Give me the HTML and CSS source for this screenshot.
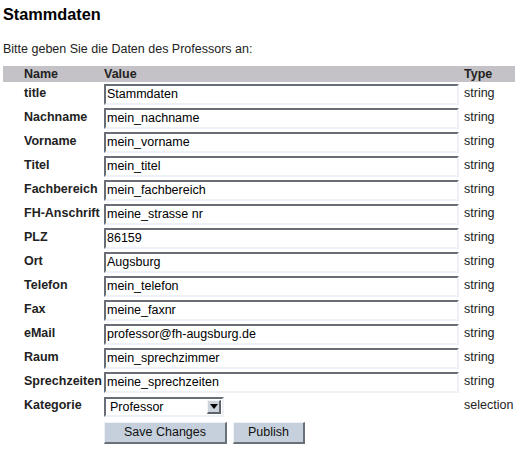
FILE: index.html
```html
<!DOCTYPE html>
<html>
<head>
<meta charset="utf-8">
<link rel="stylesheet" href="styles.css">
</head>
<body>
<h1 class="title">Stammdaten</h1>
<p class="intro">Bitte geben Sie die Daten des Professors an:</p>
<div class="form">
  <div class="row head"><span></span><span>Name</span><span>Value</span><span>Type</span></div>
  <div class="row"><span></span><span class="label">title</span><span class="val"><span class="input">Stammdaten</span></span><span class="type">string</span></div>
  <div class="row"><span></span><span class="label">Nachname</span><span class="val"><span class="input">mein_nachname</span></span><span class="type">string</span></div>
  <div class="row"><span></span><span class="label">Vorname</span><span class="val"><span class="input">mein_vorname</span></span><span class="type">string</span></div>
  <div class="row"><span></span><span class="label">Titel</span><span class="val"><span class="input">mein_titel</span></span><span class="type">string</span></div>
  <div class="row"><span></span><span class="label">Fachbereich</span><span class="val"><span class="input">mein_fachbereich</span></span><span class="type">string</span></div>
  <div class="row"><span></span><span class="label">FH-Anschrift</span><span class="val"><span class="input">meine_strasse nr</span></span><span class="type">string</span></div>
  <div class="row"><span></span><span class="label">PLZ</span><span class="val"><span class="input">86159</span></span><span class="type">string</span></div>
  <div class="row"><span></span><span class="label">Ort</span><span class="val"><span class="input">Augsburg</span></span><span class="type">string</span></div>
  <div class="row"><span></span><span class="label">Telefon</span><span class="val"><span class="input">mein_telefon</span></span><span class="type">string</span></div>
  <div class="row"><span></span><span class="label">Fax</span><span class="val"><span class="input">meine_faxnr</span></span><span class="type">string</span></div>
  <div class="row"><span></span><span class="label">eMail</span><span class="val"><span class="input">professor@fh-augsburg.de</span></span><span class="type">string</span></div>
  <div class="row"><span></span><span class="label">Raum</span><span class="val"><span class="input">mein_sprechzimmer</span></span><span class="type">string</span></div>
  <div class="row"><span></span><span class="label">Sprechzeiten</span><span class="val"><span class="input">meine_sprechzeiten</span></span><span class="type">string</span></div>
  <div class="row"><span></span><span class="label">Kategorie</span><span class="val"><span class="select"><span class="sel-text">Professor</span><span class="arrow"><svg width="8" height="5" viewBox="0 0 8 5"><path d="M0 0H8L4 5Z" fill="#000"/></svg></span></span></span><span class="type">selection</span></div>
  <div class="row buttons"><span></span><span></span><span class="val btns"><span class="btn save">Save Changes</span><span class="btn publish">Publish</span></span><span></span></div>
</div>
</body>
</html>
```
FILE: styles.css
```css
html, body {
  margin: 0;
  padding: 0;
  background: #fff;
}
body {
  padding: 0 3px;
  font-family: "Liberation Sans", Arial, sans-serif;
  font-size: 12.5px;
  color: #000;
}
.title {
  font-size: 16.3px;
  font-weight: bold;
  margin: 0;
  padding-top: 5px;
  line-height: 19px;
}
.intro {
  margin: 18px 0 0 0;
  line-height: 15px;
  color: #222;
}
.form {
  width: 512px;
  margin-top: 9px;
}
.row {
  display: grid;
  grid-template-columns: 21px 80px 360px 1fr;
  height: 24px;
}
.row.head {
  height: 16px;
  margin-bottom: 1px;
  background: #c4c2c6;
  font-weight: bold;
  font-size: 12.5px;
  line-height: 16px;
  color: #222;
}
.label {
  font-weight: bold;
  font-size: 12.5px;
  line-height: 15px;
  padding-top: 3px;
  color: #222;
  white-space: nowrap;
}
.type {
  line-height: 15px;
  padding-top: 3px;
  color: #222;
}
.val {
  padding-top: 1px;
}
.input {
  display: block;
  box-sizing: border-box;
  width: 355px;
  height: 21px;
  border-style: solid;
  border-width: 2px;
  border-color: #686e76 #eef2f6 #eef2f6 #686e76;
  background: #fff;
  padding: 1px 0 0 1px;
  line-height: 15px;
  white-space: nowrap;
}
.select {
  display: flex;
  box-sizing: border-box;
  width: 120px;
  height: 20px;
  border-style: solid;
  border-width: 2px;
  border-color: #686e76 #eef2f6 #eef2f6 #686e76;
  background: #fff;
  margin-top: 1px;
}
.sel-text {
  flex: 1;
  padding-left: 4px;
  line-height: 15px;
  padding-top: 1px;
}
.arrow {
  box-sizing: border-box;
  width: 14px;
  height: 14px;
  margin: 1px 1px 0 0;
  background: #cdd3da;
  border-style: solid;
  border-width: 1px 2px 2px 1px;
  border-color: #f2f4f6 #5e646c #5e646c #f2f4f6;
  display: flex;
  align-items: center;
  justify-content: center;
}
.arrow svg {
  display: block;
}
.row.buttons {
  height: 25px;
}
.btns {
  display: flex;
  gap: 6px;
  padding-top: 3px;
}
.btn {
  box-sizing: border-box;
  height: 22px;
  background: #c5d0dc;
  border-style: solid;
  border-width: 1px 2px 2px 1px;
  border-color: #eef2f6 #6a7078 #6a7078 #eef2f6;
  text-align: center;
  line-height: 18px;
  color: #111;
}
.save { width: 123px; }
.publish { width: 72px; }
```
